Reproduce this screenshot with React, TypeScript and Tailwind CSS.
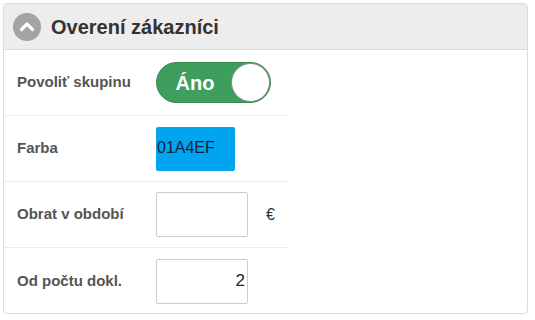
import React from "react";

function Row({ label, children, last }: { label: string; children: React.ReactNode; last?: boolean }) {
  return (
    <div className={`flex items-center h-[66px] w-[284px] ${last ? "" : "border-b border-[#ececec]"}`}>
      <div className="w-[152px] pl-[13px] text-[15px] font-bold text-[#555555]">{label}</div>
      <div className="flex items-center">{children}</div>
    </div>
  );
}

export default function App() {
  return (
    <div className="p-[3px]" style={{ fontFamily: '"Liberation Sans", Arial, sans-serif' }}>
      <div className="w-[525px] h-[311px] border border-[#dcdcdc] rounded-[4px] bg-white overflow-hidden">
        <div className="h-[46px] bg-[#ededed] border-b border-[#dcdcdc] flex items-center pl-[9px] gap-[10px]">
          <div className="w-[28px] h-[28px] rounded-full bg-[#a3a3a3] flex items-center justify-center">
            <svg width="18" height="18" viewBox="0 0 18 18">
              <path d="M3.5 11.5 L9 6 L14.5 11.5" fill="none" stroke="white" strokeWidth="3.2" strokeLinecap="round" strokeLinejoin="round" />
            </svg>
          </div>
          <div className="text-[20px] font-bold text-[#333333]">Overení zákazníci</div>
        </div>
        <div className="flex flex-col">
          <Row label="Povoliť skupinu">
            <div className="relative w-[115px] h-[41px] rounded-full bg-[#3e9e5d] border border-[#35874f] flex items-center">
              <div className="w-[76px] text-center text-white font-bold text-[20px]">Áno</div>
              <div className="absolute right-0 top-[0px] w-[39px] h-[39px] rounded-full bg-white border border-[#888888]"></div>
            </div>
          </Row>
          <Row label="Farba">
            <div className="w-[79px] h-[44px] rounded-[2px] bg-[#01A4EF] flex items-center pl-[1px] pb-[2px] text-[16px] text-[#12233a]">01A4EF</div>
          </Row>
          <Row label="Obrat v období">
            <div className="w-[92px] h-[45px] border border-[#cccccc] rounded-[2px] bg-white"></div>
            <div className="ml-[18px] text-[16px] text-[#333333]">€</div>
          </Row>
          <Row label="Od počtu dokl." last>
            <div className="w-[92px] h-[45px] border border-[#cccccc] rounded-[2px] bg-white flex items-center justify-end pr-[2px] text-[17px] text-[#222222]">2</div>
          </Row>
        </div>
      </div>
    </div>
  );
}
